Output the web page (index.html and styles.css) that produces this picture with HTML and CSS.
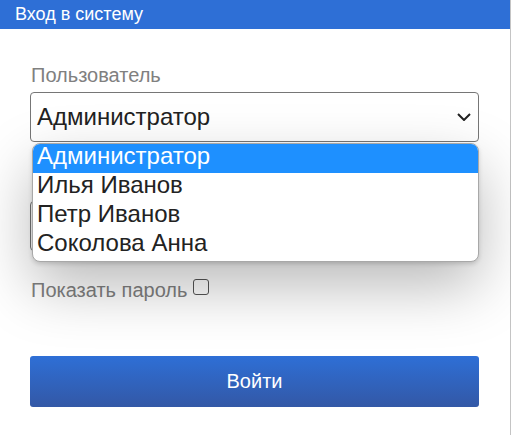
FILE: index.html
```html
<!DOCTYPE html>
<html lang="ru">
<head>
<meta charset="utf-8">
<title>Вход в систему</title>
<link rel="stylesheet" href="styles.css">
</head>
<body>
<div class="panel">
  <div class="header">Вход в систему</div>
  <form class="form">
    <div class="field">
      <label class="label">Пользователь</label>
      <div class="select-wrap">
        <div class="select">
          <span class="select-value">Администратор</span>
          <svg class="chevron" width="14" height="8" viewBox="0 0 14 8"><path d="M1 1 L7 7 L13 1" fill="none" stroke="#222" stroke-width="2"/></svg>
        </div>
        <ul class="options">
          <li class="option selected">Администратор</li>
          <li class="option">Илья Иванов</li>
          <li class="option">Петр Иванов</li>
          <li class="option">Соколова Анна</li>
        </ul>
      </div>
    </div>
    <div class="field field-pass">
      <label class="label">Пароль</label>
      <input class="input" type="password">
    </div>
    <div class="show-pass">
      <span class="label">Показать пароль</span>
      <span class="checkbox"></span>
    </div>
    <button type="button" class="btn">Войти</button>
  </form>
</div>
</body>
</html>
```
FILE: styles.css
```css
html, body {
  margin: 0;
  padding: 0;
  background: #fff;
}
body {
  font-family: "Liberation Sans", Arial, sans-serif;
}
.panel {
  width: 510px;
  min-height: 435px;
  border-right: 1px solid #c4c4c4;
  box-sizing: content-box;
}
.header {
  height: 29px;
  line-height: 29px;
  background: #2e6fd6;
  color: #fff;
  font-size: 18px;
  padding-left: 15px;
}
.form {
  display: flex;
  flex-direction: column;
  padding: 35px 31px 0 30px;
}
.field {
  display: flex;
  flex-direction: column;
  gap: 6px;
}
.label {
  font-size: 20px;
  line-height: 22px;
  color: #808080;
  padding-left: 1px;
}
.select-wrap {
  position: relative;
}
.select {
  height: 50px;
  box-sizing: border-box;
  border: 1px solid #767676;
  border-radius: 4px;
  display: flex;
  align-items: center;
  justify-content: space-between;
  padding: 0 7px 0 6px;
  background: #fff;
}
.select-value {
  font-size: 24px;
  color: #222;
}
.chevron {
  display: block;
}
.options {
  position: absolute;
  top: 51px;
  left: 2px;
  width: 447px;
  box-sizing: border-box;
  margin: 0;
  padding: 0 0 1px;
  list-style: none;
  background: #fff;
  border: 1px solid #a8a8a8;
  border-radius: 8px;
  overflow: hidden;
  box-shadow: 0 24px 60px rgba(0, 0, 0, 0.28), 0 2px 4px rgba(0, 0, 0, 0.15);
  z-index: 2;
}
.option {
  height: 29px;
  line-height: 23px;
  font-size: 24px;
  color: #222;
  padding-left: 4px;
}
.option.selected {
  background: #1e90ff;
  color: #fff;
}
.field-pass {
  margin-top: 31px;
}
.input {
  height: 50px;
  box-sizing: border-box;
  border: 1px solid #767676;
  border-radius: 4px;
  margin: 0;
}
.show-pass {
  display: flex;
  align-items: flex-start;
  gap: 6px;
  margin-top: 28px;
}
.checkbox {
  width: 14px;
  height: 14px;
  border: 1.5px solid #555;
  border-radius: 3px;
  background: #fff;
}
.btn {
  margin-top: 55px;
  height: 51px;
  border: none;
  border-radius: 3px;
  background: linear-gradient(#2e6fd6, #3358a6);
  color: #fff;
  font-family: "Liberation Sans", Arial, sans-serif;
  font-size: 20px;
}
```
